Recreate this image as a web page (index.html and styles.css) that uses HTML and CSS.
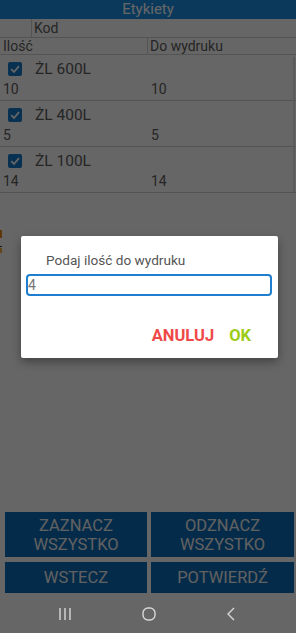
FILE: index.html
```html
<!DOCTYPE html>
<html lang="pl">
<head>
    <meta charset="UTF-8">
    <meta name="viewport" content="width=device-width, initial-scale=1.0">
    <title>Etykiety</title>
    <link rel="stylesheet" href="styles.css">
</head>
<body>
    <div class="screen">
        <div class="app">
            <div class="title">Etykiety</div>

            <div class="head-row">
                <div class="cell-blank"></div>
                <div class="cell">Kod</div>
            </div>
            <div class="head-row head-row-2">
                <div class="cell half">Ilość</div>
                <div class="cell half">Do wydruku</div>
            </div>

            <div class="list">
                <div class="item">
                    <div class="item-top">
                        <span class="check"><svg viewBox="0 0 14 14"><path d="M3.2 7.2 L6 10 L11 4.2" /></svg></span>
                        <span class="name">ŻL 600L</span>
                    </div>
                    <div class="item-nums"><span class="half">10</span><span class="half">10</span></div>
                </div>
                <div class="item">
                    <div class="item-top">
                        <span class="check"><svg viewBox="0 0 14 14"><path d="M3.2 7.2 L6 10 L11 4.2" /></svg></span>
                        <span class="name">ŻL 400L</span>
                    </div>
                    <div class="item-nums"><span class="half">5</span><span class="half">5</span></div>
                </div>
                <div class="item">
                    <div class="item-top">
                        <span class="check"><svg viewBox="0 0 14 14"><path d="M3.2 7.2 L6 10 L11 4.2" /></svg></span>
                        <span class="name">ŻL 100L</span>
                    </div>
                    <div class="item-nums"><span class="half">14</span><span class="half">14</span></div>
                </div>
                <div class="scroll-thumb"></div>
            </div>

            <div class="spacer"></div>

            <div class="actions">
                <button class="btn tall">ZAZNACZ<br>WSZYSTKO</button>
                <button class="btn tall">ODZNACZ<br>WSZYSTKO</button>
                <button class="btn">WSTECZ</button>
                <button class="btn">POTWIERDŹ</button>
            </div>

            <div class="edge-peek"></div>
            <div class="scrim"></div>

            <div class="dialog">
                <div class="dialog-msg">Podaj ilość do wydruku</div>
                <input class="dialog-input" type="text" value="4">
                <div class="dialog-buttons">
                    <span class="btn-cancel">ANULUJ</span>
                    <span class="btn-ok">OK</span>
                </div>
            </div>
        </div>

        <div class="navbar">
            <svg class="nav-icon" width="12" height="14" viewBox="0 0 12 14">
                <path d="M1 1 V13 M6 1 V13 M11 1 V13" />
            </svg>
            <svg class="nav-icon" width="14" height="14" viewBox="0 0 14 14">
                <rect x="1" y="1" width="12" height="12" rx="5" />
            </svg>
            <svg class="nav-icon" width="8" height="14" viewBox="0 0 8 14">
                <path d="M7 1 L1 7 L7 13" />
            </svg>
        </div>
    </div>
</body>
</html>
```

FILE: styles.css
```css
body {
    margin: 0;
    font-family: Roboto, 'Noto Sans', sans-serif;
    background: #666666;
}

.screen {
    width: 296px;
    height: 633px;
    display: flex;
    flex-direction: column;
    overflow: hidden;
}

.app {
    position: relative;
    flex: 1;
    display: flex;
    flex-direction: column;
    background: #ffffff;
}

.title {
    height: 19px;
    line-height: 19px;
    background: #1a90e6;
    color: #ffffff;
    text-align: center;
    font-size: 15px;
}

.head-row {
    display: flex;
    height: 18px;
    border-bottom: 1px solid #d2d2d2;
    color: #5e5e5e;
    font-size: 14px;
    line-height: 18px;
}

.head-row-2 {
    height: 16px;
    line-height: 16px;
}

.cell-blank {
    width: 31px;
    border-right: 1px solid #d2d2d2;
}

.cell {
    padding-left: 2px;
}

.half {
    width: 149px;
    box-sizing: border-box;
}

.head-row-2 .half:first-child {
    border-right: 1px solid #d2d2d2;
    padding-left: 3px;
}

.list {
    position: relative;
}

.item {
    border-bottom: 1px solid #d2d2d2;
    padding-bottom: 3px;
    color: #5e5e5e;
    font-size: 14px;
}

.item-top {
    height: 27px;
    display: flex;
    align-items: center;
}

.name {
    font-size: 15.5px;
}

.check {
    width: 14px;
    height: 14px;
    margin-left: 8px;
    margin-right: 13px;
    border-radius: 2px;
    background: #1478c8;
    display: flex;
}

.check svg {
    width: 14px;
    height: 14px;
    fill: none;
    stroke: #ffffff;
    stroke-width: 1.8;
}

.item-nums {
    display: flex;
    height: 15px;
    line-height: 15px;
}

.item-nums .half {
    padding-left: 3px;
}

.scroll-thumb {
    position: absolute;
    right: 1px;
    top: 2px;
    width: 2px;
    height: 135px;
    background: #e4e4e4;
}

.spacer {
    flex: 1;
}

.actions {
    display: grid;
    grid-template-columns: 142px 143px;
    gap: 5px 4px;
    padding: 0 2px 2px 5px;
}

.btn {
    border: none;
    background: #0c6cb8;
    color: #f2f2f2;
    font-family: Roboto, sans-serif;
    font-size: 16.5px;
    line-height: 19px;
    height: 31px;
    padding: 0;
}

.btn.tall {
    height: 45px;
}

.edge-peek {
    position: absolute;
    left: 0;
    top: 230px;
    width: 2px;
    height: 23px;
    background: linear-gradient(#f08a20 0, #f08a20 8px, transparent 8px, transparent 16px, #333 16px, #333 17px, transparent 17px, transparent 18px, #f0b040 18px);
}

.scrim {
    position: absolute;
    inset: 0;
    background: rgba(0, 0, 0, 0.6);
}

.dialog {
    position: absolute;
    left: 21px;
    top: 236px;
    width: 257px;
    height: 122px;
    background: #ffffff;
    border-radius: 2px;
    box-shadow: 0 4px 10px rgba(0, 0, 0, 0.35);
}

.dialog-msg {
    margin: 16px 0 0 25px;
    font-size: 13.6px;
    color: #555555;
    line-height: 17px;
}

.dialog-input {
    display: block;
    margin: 5px 0 0 5px;
    width: 246px;
    height: 22px;
    box-sizing: border-box;
    border: 2px solid #1d7fce;
    border-radius: 4px;
    padding: 0;
    font-family: Roboto, sans-serif;
    font-size: 14px;
    color: #777777;
    outline: none;
}

.dialog-buttons {
    display: flex;
    justify-content: flex-end;
    gap: 15px;
    margin-top: 31px;
    padding-right: 27px;
    font-size: 16.5px;
    font-weight: bold;
    line-height: 18px;
}

.btn-cancel {
    color: #ef4848;
}

.btn-ok {
    color: #9ccc17;
}

.navbar {
    height: 38px;
    background: #666666;
    display: flex;
    align-items: center;
    gap: 71px;
    padding-left: 59px;
}

.nav-icon {
    fill: none;
    stroke: #d8d8d8;
    stroke-width: 1.4;
}
```
